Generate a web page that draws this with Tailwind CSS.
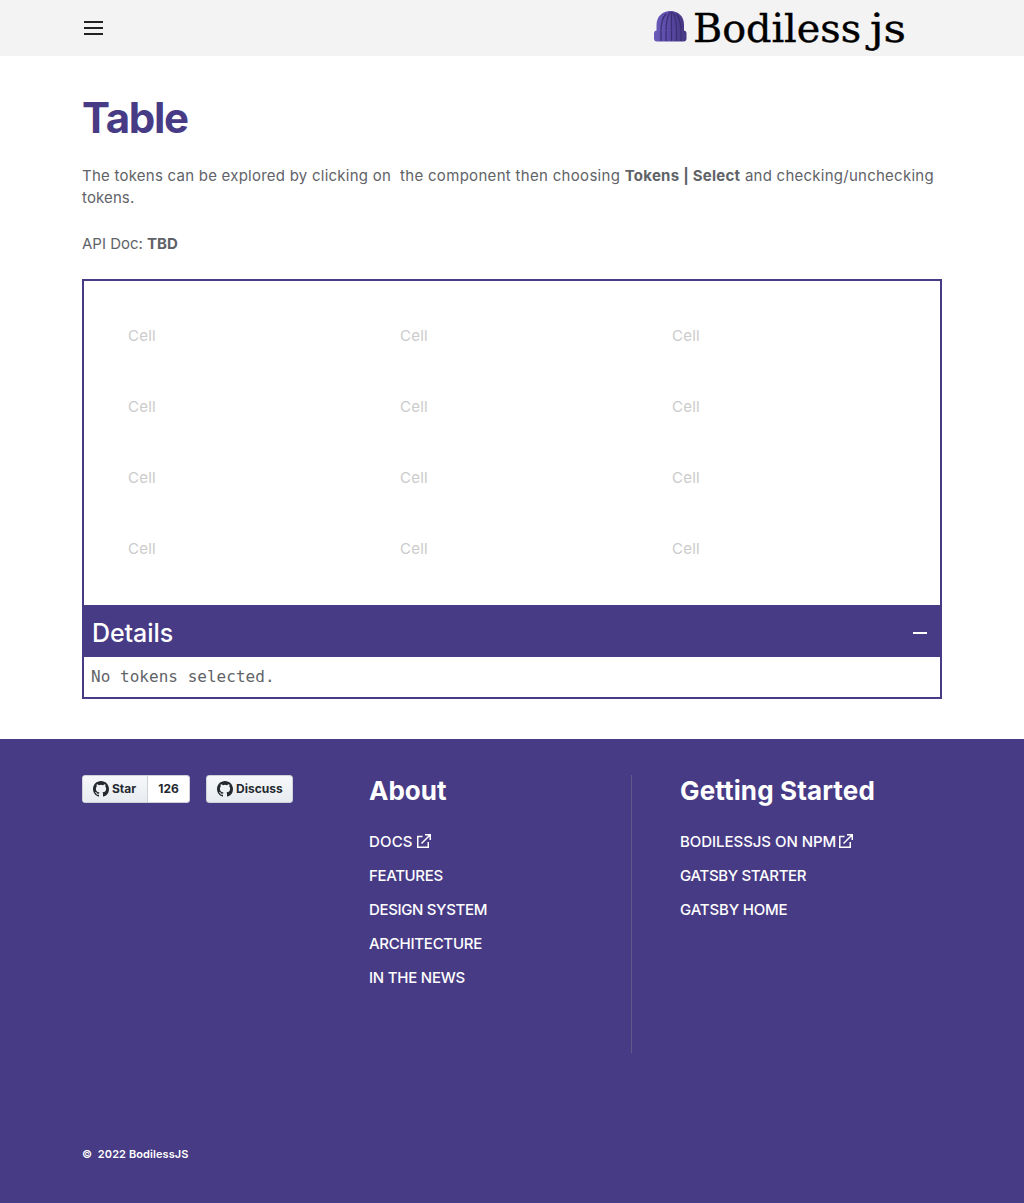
<!DOCTYPE html>
<html lang="en">
<head>
<meta charset="utf-8">
<title>Table | BodilessJS</title>
<script src="https://cdn.jsdelivr.net/npm/@tailwindcss/browser@4"></script>
</head>
<body class="bg-white font-['Inter',sans-serif] text-[#5f6368] text-base">
<header class="h-14 bg-[#f3f3f3] flex items-start justify-between pl-[84px] pr-[118px]">
  <button aria-label="Menu" class="mt-[20px]"><svg class="block" width="20" height="16" viewBox="0 0 20 16" stroke="#222" stroke-width="2"><path d="M0 2h19M0 8h19M0 14h19"/></svg></button>
  <svg width="254" height="56" viewBox="0 0 254 56" aria-label="Bodiless js">
    <defs><linearGradient id="cap"><stop offset="0" stop-color="#6a5ab9"/><stop offset=".5" stop-color="#5949a5"/><stop offset="1" stop-color="#453681"/></linearGradient></defs>
    <path d="M4.500 32V25C4.500 16 11 11 18.500 11S32 16 32 25v7z" fill="url(#cap)"/>
    <path d="M9 31c0-8 1-13 5-17M14 31c0-9 1-14 4-19M19.500 31V12M24.500 31c0-9-1-14-4-19M29 31c0-8-1-13-5-17" fill="none" stroke="#3b2d70" stroke-width="1.200"/>
    <rect x="2" y="30.500" width="32.500" height="11" rx="3" fill="url(#cap)"/>
    <path d="M9 31v10M14 31v10M19.500 31v10M24.500 31v10M29 31v10" stroke="#3b2d70" stroke-width="1.200"/>
    <g font-family="DejaVu Serif, serif" font-size="39" fill="#000" stroke="#000" stroke-width=".4">
      <text x="41" y="41.500" textLength="168" lengthAdjust="spacingAndGlyphs">Bodiless</text>
      <text x="218" y="41.500" textLength="36" lengthAdjust="spacingAndGlyphs">js</text>
    </g>
  </svg>
</header>
<main class="px-[82px] h-[683px]">
  <h1 class="pt-[37px] text-[42px] leading-[50px] font-bold text-[#483b85] tracking-[-1.3px]">Table</h1>
  <p class="mt-[22px] text-[15px] leading-[22px] whitespace-nowrap tracking-[0.310px]"><span class="tracking-[0.240px]">The tokens can be explored by clicking on&nbsp;</span> the component then choosing <b class="tracking-[0.250px]">Tokens | Select</b> <span class="tracking-[0.250px]">and checking/unchecking</span><br><span class="tracking-[0.120px]">tokens.</span></p>
  <p class="mt-6 text-[15px] leading-[22px]">API Doc: <b>TBD</b></p>
  <section class="mt-6 border-2 border-[#483b85] h-[420px]">
    <div class="h-[324px] pl-11 pt-5 grid grid-cols-[272px_272px_1fr] auto-rows-[71px] items-center text-[15px] tracking-[0.250px] text-[#cbcbcb]">
      <div>Cell</div><div>Cell</div><div>Cell</div>
      <div>Cell</div><div>Cell</div><div>Cell</div>
      <div>Cell</div><div>Cell</div><div>Cell</div>
      <div>Cell</div><div>Cell</div><div>Cell</div>
    </div>
    <div class="h-[52px] bg-[#483b85] flex items-center justify-between pl-2 pr-[13px] pt-1 text-white">
      <h2 class="text-[25px] leading-8 font-medium tracking-[-0.080px]">Details</h2>
      <span class="w-[14px] h-[2px] bg-white"></span>
    </div>
    <pre class="pl-[7px] pt-[8px] text-[16px] leading-6 tracking-[0.030px] font-['DejaVu_Sans_Mono',monospace]">No tokens selected.</pre>
  </section>
</main>
<footer class="h-[464px] bg-[#483b85] text-white px-[82px] pt-9 flex flex-col">
  <div class="flex h-[278px]">
    <div class="w-[287px] flex items-start gap-4 text-xs font-bold text-[#24292f]">
      <div class="flex h-7 w-[108px] rounded-[3px] overflow-hidden border border-[#cdd2d8] bg-white">
        <div class="w-[65px] flex items-center gap-[3px] pl-[10px] bg-linear-to-b from-[#f6f8fa] to-[#e8ecf0] border-r border-[#cdd2d8]">
          <svg class="shrink-0" width="16" height="16" viewBox="0 0 16 16" fill="currentColor"><path d="M8 0C3.580 0 0 3.580 0 8c0 3.540 2.290 6.530 5.470 7.590.4.070.55-.17.55-.38 0-.19-.01-.82-.01-1.490-2.010.37-2.530-.49-2.690-.94-.09-.23-.48-.94-.82-1.130-.28-.15-.68-.52-.01-.53.63-.01 1.080.58 1.230.82.72 1.210 1.870.87 2.330.66.070-.52.280-.87.510-1.070-1.780-.2-3.640-.89-3.640-3.950 0-.87.310-1.590.820-2.150-.080-.2-.360-1.020.080-2.120 0 0 .670-.210 2.200.820a7.600 7.600 0 0 1 4 0c1.530-1.040 2.200-.820 2.200-.820.440 1.100.160 1.920.080 2.120.510.560.820 1.270.820 2.150 0 3.070-1.870 3.750-3.650 3.950.290.250.540.730.540 1.480 0 1.070-.010 1.930-.010 2.200 0 .210.150.460.550.380A8 8 0 0 0 16 8c0-4.420-3.580-8-8-8z"/></svg>
          <span>Star</span>
        </div>
        <span class="flex-1 text-center leading-[26px]">126</span>
      </div>
      <div class="flex items-center gap-[3px] h-7 w-[87px] pl-[10px] rounded-[3px] border border-[#cdd2d8] bg-linear-to-b from-[#f6f8fa] to-[#e8ecf0]">
        <svg class="shrink-0" width="16" height="16" viewBox="0 0 16 16" fill="currentColor"><path d="M8 0C3.580 0 0 3.580 0 8c0 3.540 2.290 6.530 5.470 7.590.4.070.55-.17.55-.38 0-.19-.01-.82-.01-1.490-2.010.37-2.530-.49-2.690-.94-.09-.23-.48-.94-.82-1.130-.28-.15-.68-.52-.01-.53.63-.01 1.080.58 1.230.82.72 1.210 1.870.87 2.330.66.070-.52.280-.87.510-1.070-1.780-.2-3.640-.89-3.640-3.950 0-.87.310-1.590.820-2.150-.080-.2-.360-1.020.080-2.120 0 0 .670-.210 2.200.820a7.600 7.600 0 0 1 4 0c1.530-1.040 2.200-.820 2.200-.820.440 1.100.160 1.920.080 2.120.510.560.820 1.270.820 2.150 0 3.070-1.870 3.750-3.650 3.950.290.250.540.730.540 1.480 0 1.070-.010 1.930-.010 2.200 0 .210.150.460.550.380A8 8 0 0 0 16 8c0-4.420-3.580-8-8-8z"/></svg>
        <span>Discuss</span>
      </div>
    </div>
    <nav class="w-[263px] border-r border-[#62598a]">
      <h3 class="text-[26px] leading-8 font-bold">About</h3>
      <ul class="mt-[18px] text-[15px] leading-[34px] font-medium tracking-[-0.35px]">
        <li class="flex items-center gap-1 tracking-[0.180px]">DOCS <svg class="-mt-[2px]" width="14" height="14" viewBox="0 0 14 14" fill="none" stroke="#fff" stroke-width="1.500"><path d="M5.500 2.500H.75v10.750h10.500V8M8 .75h5.250V6M13 1 4.500 9.500"/></svg></li>
        <li>FEATURES</li><li>DESIGN SYSTEM</li><li class="tracking-[-0.26px]">ARCHITECTURE</li><li class="tracking-[-0.23px]">IN THE NEWS</li>
      </ul>
    </nav>
    <nav class="pl-12 whitespace-nowrap">
      <h3 class="text-[26px] leading-8 font-bold tracking-[0.130px]">Getting Started</h3>
      <ul class="mt-[18px] text-[15px] leading-[34px] font-medium tracking-[-0.35px]">
        <li class="flex items-center gap-[3px] tracking-[-0.050px]">BODILESSJS ON NPM <svg class="-mt-[2px]" width="14" height="14" viewBox="0 0 14 14" fill="none" stroke="#fff" stroke-width="1.500"><path d="M5.500 2.500H.75v10.750h10.500V8M8 .75h5.250V6M13 1 4.500 9.500"/></svg></li>
        <li>GATSBY STARTER</li><li class="tracking-[-0.17px]">GATSBY HOME</li>
      </ul>
    </nav>
  </div>
  <p class="mt-[92px] text-[11px] leading-[18px] font-semibold tracking-[0.090px]">©&nbsp; 2022 BodilessJS</p>
</footer>
</body>
</html>
